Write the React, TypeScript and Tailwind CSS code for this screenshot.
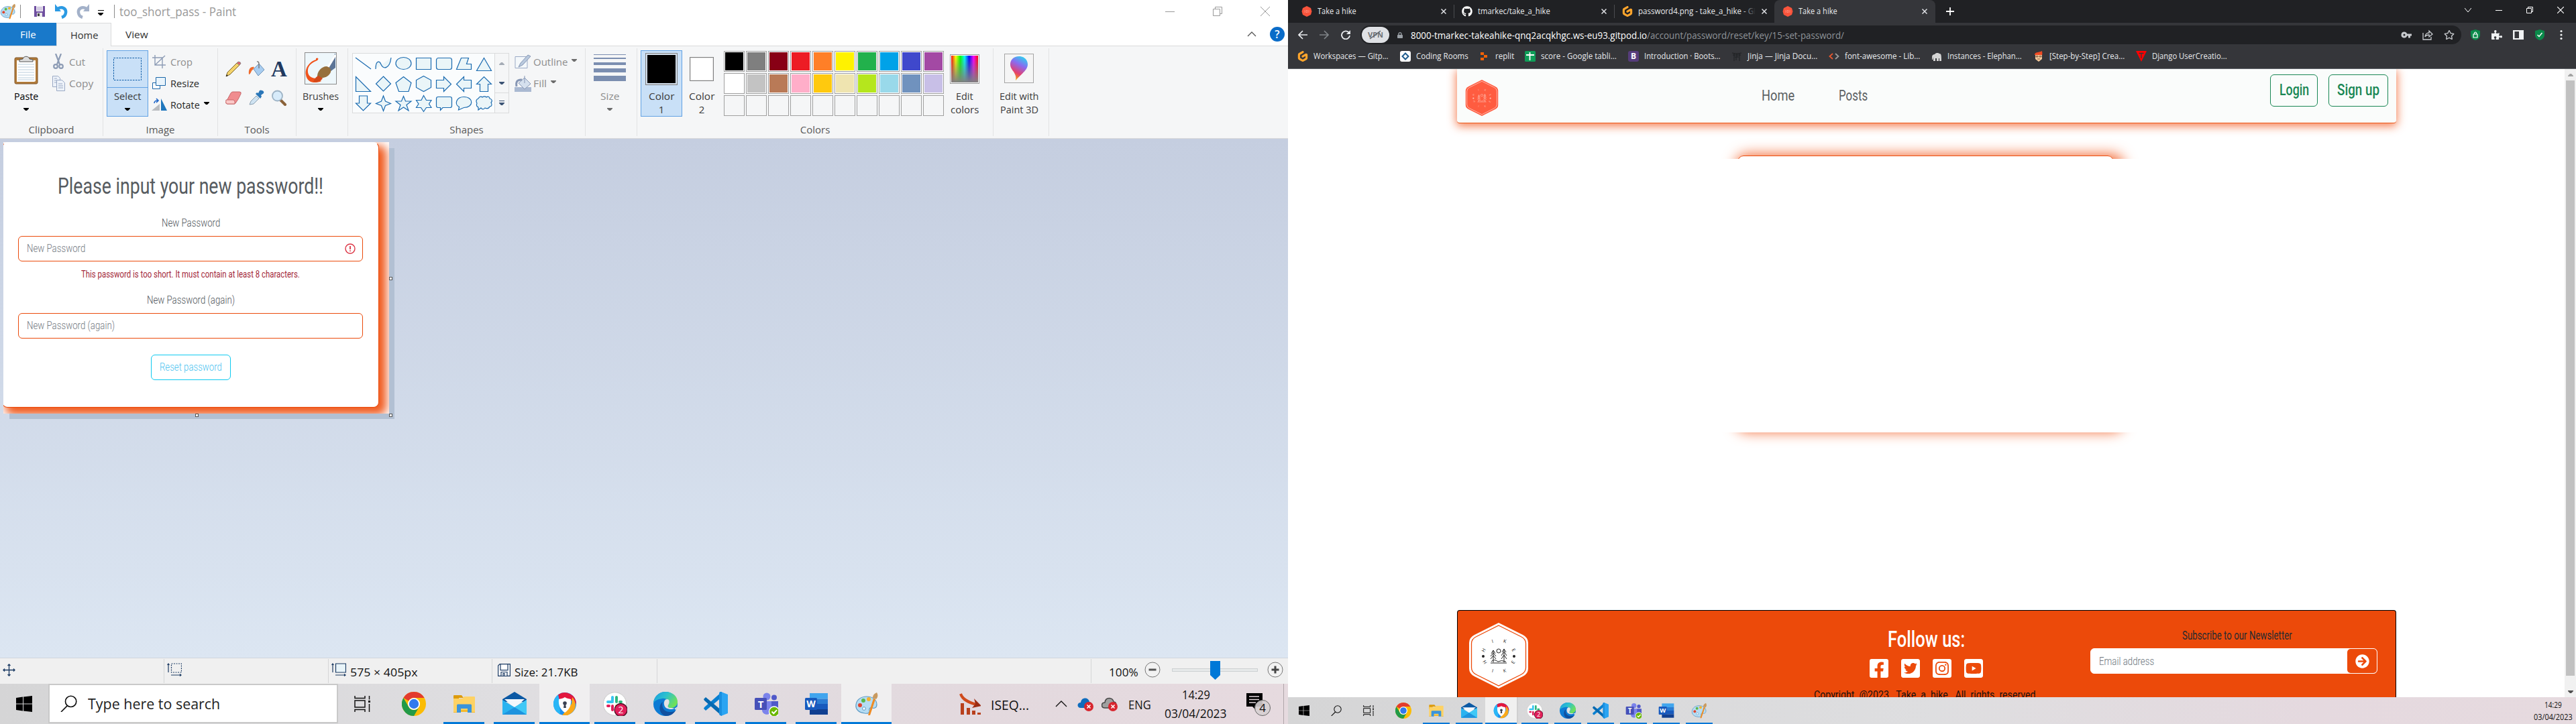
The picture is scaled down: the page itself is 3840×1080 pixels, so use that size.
import React, { useLayoutEffect, useRef } from "react";
import {
  FaFacebookSquare,
  FaTwitterSquare,
  FaInstagramSquare,
  FaYoutubeSquare,
  FaGithub,
  FaArrowCircleRight,
  FaRegStar,
  FaPuzzlePiece,
  FaLock,
} from "react-icons/fa";
import { SiGitpod } from "react-icons/si";

type Kids = { children?: React.ReactNode; className?: string };

/* One line of text, stretched or condensed to the width of its box. */
function Fit({ children, className = "" }: Kids) {
  const outer = useRef<HTMLSpanElement>(null);
  const inner = useRef<HTMLSpanElement>(null);
  useLayoutEffect(() => {
    const o = outer.current;
    const i = inner.current;
    if (!o || !i || !i.offsetWidth) return;
    i.style.transform = `scaleX(${o.clientWidth / i.offsetWidth})`;
  });
  return (
    <span ref={outer} className={"block shrink-0 whitespace-nowrap " + className}>
      <span ref={inner} className="inline-block origin-left whitespace-pre">
        {children}
      </span>
    </span>
  );
}

const Caret = ({ className = "text-black" }: Kids) => (
  <svg viewBox="0 0 8 4" className={"h-1 w-2 " + className} fill="currentColor">
    <path d="M0 0h8v1L5 4H3L0 1z" />
  </svg>
);

/* ---------- application icons ---------- */

const PaintIcon = ({ className = "" }: Kids) => (
  <svg viewBox="0 0 36 36" className={className}>
    <path d="M18 7c9 0 15 5 15 12 0 5-4 6-7 5-3-1-5 1-4 4 1 3-2 5-7 4C6 31 1 26 2 19 3 12 9 7 18 7z" fill="#b5dcf3" stroke="#5f9bc4" strokeWidth="1.2" />
    <circle cx="8" cy="20" r="3" fill="#e0452f" />
    <circle cx="13" cy="13" r="3" fill="#5cb84a" />
    <circle cx="21" cy="11" r="3" fill="#f2b233" />
    <circle cx="14" cy="25" r="2.4" fill="#f5f9fc" stroke="#5f9bc4" />
    <path d="M20 35l8-25 3 1-8 24z" fill="#ef8b23" />
    <path d="M27 9c0-4 2-6 6-8 2 3 2 7-1 10z" fill="#c99a60" />
  </svg>
);

const WindowsIcon = ({ className = "" }: Kids) => (
  <svg viewBox="0 0 24 24" className={className} fill="#000">
    <path d="M0 3l10-1.4v9.9H0zM11 1.5L24 0v11.5H11zM0 12.5h10v9.9L0 21zM11 12.5h13V24l-13-1.6z" />
  </svg>
);

const SearchGlyph = ({ className = "" }: Kids) => (
  <svg viewBox="0 0 24 24" className={className} fill="none" stroke="#111" strokeWidth="1.6">
    <circle cx="15" cy="9" r="7.8" />
    <path d="M10 15L1 24" />
  </svg>
);

const TaskViewIcon = ({ className = "" }: Kids) => (
  <svg viewBox="0 0 24 24" className={className} fill="none" stroke="#111" strokeWidth="1.5">
    <path d="M1 0v3.500h15V0M1 24v-3.500h15V24M1 7h15v10H1zM22.500 0v5.500M22.500 12v12" />
    <path d="M21 7h3v3h-3z" fill="#111" stroke="none" />
  </svg>
);

const ChromeIcon = ({ className = "" }: Kids) => (
  <svg viewBox="0 0 36 36" className={className}>
    <circle cx="18" cy="18" r="18" fill="#fbbc04" />
    <path d="M18 0a18 18 0 0 1 15.600 9H18a9 9 0 0 0-7.800 4.500L2.400 9A18 18 0 0 1 18 0z" fill="#e33b2e" />
    <path d="M2.400 9A18 18 0 0 0 18 36l7.800-13.500A9 9 0 0 1 10.200 22.500z" fill="#229a48" />
    <circle cx="18" cy="18" r="9" fill="#fff" />
    <circle cx="18" cy="18" r="7.200" fill="#3079ed" />
  </svg>
);

const FolderIcon = ({ className = "" }: Kids) => (
  <svg viewBox="0 0 36 36" className={className}>
    <path d="M2 6q0-1 1-1h11l3 4h-7v6H2z" fill="#dd9b0c" />
    <path d="M2 10h13l3-3h15q1 0 1 1v22H2z" fill="#fed264" />
    <path d="M7 31V20q0-1.500 1.500-1.500h19q1.500 0 1.500 1.500v11h-6v-6H13v6z" fill="#3a94dc" />
    <path d="M2 30h5v1H2zM29 30h5v1h-5zM13 27h10v3H13z" fill="#f5b92b" />
  </svg>
);

const MailIcon = ({ className = "" }: Kids) => (
  <svg viewBox="0 0 36 36" className={className}>
    <path d="M0 11L18 0l18 11v4H0z" fill="#0c59a4" />
    <path d="M3 11h30L18 24z" fill="#f3f8fc" />
    <path d="M0 12l18 11L36 12v22H0z" fill="#2ab3f0" />
    <path d="M36 12L18 23l18 11z" fill="#3fc8f6" />
    <path d="M0 34l18-11 18 11z" fill="#1e93de" />
  </svg>
);

const SecureIcon = ({ className = "" }: Kids) => (
  <svg viewBox="0 0 36 36" className={className}>
    <circle cx="18" cy="18" r="17" fill="#1c8ff0" />
    <path d="M8 4.500A17 17 0 0 1 35 18l-6-5H10z" fill="#e3173f" />
    <path d="M29 8c6 6 9 20-7 27H14l14-17z" fill="#fba919" />
    <path d="M8 4.500C1 10-2 20 5 29l6 5-1-21z" fill="#29b6f6" />
    <path d="M18 8c3 2 6 2 9 3 1 10-3 16-9 20C12 27 8 21 9 11c3-1 6-1 9-3z" fill="#fff" />
    <circle cx="18" cy="17" r="2.800" fill="#3b4252" />
    <path d="M17 18h2l1 6h-4z" fill="#3b4252" />
  </svg>
);

const SlackIcon = ({ className = "" }: Kids) => (
  <svg viewBox="0 0 36 36" className={className}>
    <circle cx="17.500" cy="18" r="17.200" fill="#fff" stroke="#c9c9c9" />
    <g strokeWidth="4" strokeLinecap="round">
      <path d="M14 8v5M7 15h7" stroke="#36c5f0" />
      <path d="M20 8v7M25 15h2" stroke="#2eb67d" />
      <path d="M7 21h2M14 21v6" stroke="#e01e5a" />
      <path d="M20 21h7M20 26v1" stroke="#ecb22e" />
    </g>
    <circle cx="26.500" cy="27" r="9.500" fill="#e01e5a" stroke="#4a0f22" strokeWidth="1.300" />
    <text x="26.500" y="32" textAnchor="middle" className="font-['Open_Sans'] text-[14px]" fill="#fff">2</text>
  </svg>
);

const EdgeIcon = ({ className = "" }: Kids) => (
  <svg viewBox="0 0 36 36" className={className}>
    <defs>
      <linearGradient id="edgeTop" x1="0" y1="0" x2="1" y2="0.500">
        <stop offset="0" stopColor="#1a9be0" />
        <stop offset="0.500" stopColor="#2bc0cf" />
        <stop offset="1" stopColor="#6ee05a" />
      </linearGradient>
    </defs>
    <circle cx="18" cy="18" r="18" fill="#0d7bd4" />
    <path d="M0 17C1 6 9 0 18 0c11 0 18 7 18 15 0 6-5 9-10 9-4 0-5-2-4-4 4-6-3-11-9-10C6 11 1 14 0 17z" fill="url(#edgeTop)" />
    <path d="M14 15c-3 10 4 16 12 15 3 0 5-1 7-2-3 5-8 8-14 8C9 35 6 20 14 15z" fill="#11509f" />
    <path d="M23 12c-4-3-8 1-7 7 1 5 5 7 11 7 4 0 7-3 9-4-2 3-1 4-3 5-1-3-4-3-7-3-4 0-5-2-4-4 2-3 2-6 1-8z" fill="#e3e3e4" />
  </svg>
);

const CodeIcon = ({ className = "" }: Kids) => (
  <svg viewBox="0 0 36 36" className={className}>
    <path d="M0 25l3 3L27 8V0L1 23z" fill="#0a7fd0" />
    <path d="M0 11l3-3 24 20v8L1 13z" fill="#0669b1" />
    <path d="M26 0l10 4v28l-10 4z" fill="#2ba4f2" />
    <path d="M24 0h3v36l-3-1-1-2V2z" fill="#1a8fe0" />
  </svg>
);

const TeamsIcon = ({ className = "" }: Kids) => (
  <svg viewBox="0 0 36 36" className={className}>
    <circle cx="19" cy="7" r="5.500" fill="#7b83eb" />
    <circle cx="30" cy="8.500" r="4" fill="#5059c9" />
    <path d="M25 14h11v10c0 7-8 8-11 5z" fill="#5059c9" />
    <path d="M12 14h14v13c0 9-14 9-14 0z" fill="#7b83eb" />
    <rect x="1" y="9" width="18" height="18" rx="1.500" fill="#4650b8" />
    <text x="10" y="23.500" textAnchor="middle" className="font-['Open_Sans'] text-[15px] font-bold" fill="#fff">T</text>
    <circle cx="30" cy="29.500" r="7.500" fill="#6bb700" stroke="#fff" strokeWidth="1.300" />
    <path d="M26.500 29.500l2.800 2.800 4.800-5.200" fill="none" stroke="#fff" strokeWidth="2" />
  </svg>
);

const WordIcon = ({ className = "" }: Kids) => (
  <svg viewBox="0 0 36 36" className={className}>
    <path d="M8 2h27v8.500H8z" fill="#41a5ee" />
    <path d="M8 10.500h27V18H8z" fill="#2b7cd3" />
    <path d="M8 18h27v8H8z" fill="#185abd" />
    <path d="M8 26h27v8H8z" fill="#103f91" />
    <rect x="1" y="9" width="18" height="18" rx="1.500" fill="#185abd" />
    <text x="10" y="23" textAnchor="middle" className="font-['Open_Sans'] text-[14px] font-bold" fill="#fff">W</text>
  </svg>
);

/* ---------- Paint ribbon ---------- */

const Group = ({ w, label, children }: { w: string; label?: string; children?: React.ReactNode }) => (
  <div className={"flex h-[131px] shrink-0 flex-col border-r border-[#e2e3e4] " + w}>
    <div className="flex h-[111px] items-start">{children}</div>
    <div className="flex h-5 items-center justify-center text-[#5a5a5a]">{label}</div>
  </div>
);

const label = (w: string, text: string) => <Fit className={"text-center leading-5 " + w}>{text}</Fit>;

const Row = ({ icon, w, text, dim, caret, iconW = "w-7" }: { icon: React.ReactNode; w: string; text: string; dim?: boolean; caret?: boolean; iconW?: string }) => (
  <div className={"flex h-8 items-center " + (dim ? "text-[#8d8d8d]" : "text-[#262626]")}>
    <div className={"flex " + iconW}>{icon}</div>
    <Fit className={w}>{text}</Fit>
    {caret && <Caret className={"mb-1 ml-1.5 " + (dim ? "text-[#6d6d6d]" : "text-black")} />}
  </div>
);

const shapeIcons: React.ReactNode[] = [
  <path d="M4 6l23 17" />,
  <path d="M4 23c0-14 6-12 8-7 3 8 13 7 15-10" />,
  <ellipse cx="15.500" cy="14.500" rx="11.500" ry="9" />,
  <path d="M4.500 6.500h22v17h-22z" />,
  <rect x="4.500" y="6.500" width="23" height="17" rx="3" />,
  <path d="M11.500 6.500h11l-3 9h7v8h-22z" />,
  <path d="M15.500 6.500l11 19h-22z" />,
  <path d="M4.500 4.500v22h22z" />,
  <path d="M15.500 4l11 11-11 11-11-11z" />,
  <path d="M15.500 4.500l11.500 9-4 13H8.500l-4.500-13z" />,
  <path d="M15.500 3.500l11 6v11l-11 6-11-6v-11z" />,
  <path d="M4.500 9.500h11v-5l11 11-11 11v-5h-11z" />,
  <path d="M26.500 9.500h-11v-5l-11 11 11 11v-5h11z" />,
  <path d="M9.500 26.500v-11h-5l11-11 11 11h-5v11z" />,
  <path d="M9.500 4v11h-5l11 11 11-11h-5V4z" />,
  <path d="M15.500 4l3 8 8 3.500-8 3-3 8-3-8-8-3 8-3.500z" />,
  <path d="M15.500 4.500l3 7.500h8.500l-7 5.500 3 8.500-7.500-5-7.500 5 3-8.500-7-5.500h8.500z" />,
  <path d="M15.500 3.500l4 7h7.500l-3.500 5.500 3.500 5.500h-7.500l-4 6-4-6H4.500l3.500-5.500-3.500-5.500h7.500z" />,
  <path d="M7 5.500h18q2.500 0 2.500 2.500v11q0 2.500-2.500 2.500H14l-3.500 4v-4H7q-2.500 0-2.500-2.500V8q0-2.500 2.500-2.500z" />,
  <path d="M15.500 5.500c15 0 15 16 0 16l-8 3.500 1-4.500c-8-4-4-15 7-15z" />,
  <path d="M7 8c2-4 5-3 6-2 3-2 5-1 6 0 3-2 5 0 5 2 4 1 4 4 2 6 2 3 1 6-2 6-2 4-5 3-7 2-2 3-5 2-6 0l-4 3v-4c-3-1-3-4-2-6-2-3-1-6 2-7z" />,
];

const palette = [
  "bg-black", "bg-[#7f7f7f]", "bg-[#880015]", "bg-[#ed1c24]", "bg-[#ff7f27]", "bg-[#fff200]", "bg-[#22b14c]", "bg-[#00a2e8]", "bg-[#3f48cc]", "bg-[#a349a4]",
  "bg-white", "bg-[#c3c3c3]", "bg-[#b97a57]", "bg-[#ffaec9]", "bg-[#ffc90e]", "bg-[#efe4b0]", "bg-[#b5e61d]", "bg-[#99d9ea]", "bg-[#7092be]", "bg-[#c8bfe7]",
];

function Ribbon() {
  return (
    <div className="flex h-[138px] items-start border-b border-[#d9dadb] bg-[#f5f6f7] pt-[3px]">
      <Group w="w-[154px]" label="Clipboard">
        <div className="mt-[3px] ml-2 flex h-[99px] w-[62px] flex-col items-center">
          <div className="flex h-[58px] items-center">
            <svg viewBox="0 0 36 44" className="h-11 w-9">
              <rect x="1" y="4" width="34" height="39" rx="2" fill="#b17b3a" stroke="#80562a" />
              <path d="M4 8h28v31l-2 1H4z" fill="#fff" />
              <path d="M6 14h24M6 18h24M6 22h24M6 26h24M6 30h24M6 34h24M6 37h24" stroke="#b9cddc" strokeWidth="1" />
              <path d="M8 10V7l5-1c1-5 9-5 10 0l5 1v3z" fill="#ddd" stroke="#555" />
            </svg>
          </div>
          {label("w-[36px]", "Paste")}
          <Caret className="mt-2 text-black" />
        </div>
        <div className="mt-[4px] ml-2">
          <Row dim iconW="w-[25px]" w="w-6" text="Cut" icon={
            <svg viewBox="0 0 18 24" className="h-6 w-[18px]" fill="none" stroke="#8d9cb5" strokeWidth="2.200">
              <path d="M5 0l6 16M13 0L7 16" /><circle cx="5" cy="19" r="2.800" /><circle cx="13" cy="19" r="2.800" />
            </svg>} />
          <Row dim iconW="w-[25px]" w="w-9" text="Copy" icon={
            <svg viewBox="0 0 20 24" className="h-6 w-5" fill="#edf2f9" stroke="#9aa9c4">
              <path d="M.5 1.500h8l3 3v13H.5z" /><path d="M6.500 7.500h8l4 4v12h-12z" /><path d="M3 5h4M3 8h3M3 11h3M9 13h6M9 16h7M9 19h7" />
            </svg>} />
        </div>
      </Group>

      <Group w="w-[171px]" label="Image">
        <div className="mt-[3px] ml-[5px] flex h-[99px] w-[62px] flex-col items-center border border-[#62a2e4] bg-[#c9e0f7]">
          <div className="flex h-[55px] w-full items-center justify-center border-b border-[#62a2e4]">
            <svg viewBox="0 0 42 34" className="h-[34px] w-[42px]"><rect x=".5" y=".5" width="41" height="33" fill="none" stroke="#0b5aa5" strokeDasharray="2.500 1.500" /></svg>
          </div>
          <div className="mt-0.5 text-[#3b3b3b]">{label("w-10", "Select")}</div>
          <Caret className="mt-2 text-black" />
        </div>
        <div className="mt-[4px] ml-[5px]">
          <Row dim w="w-[33px]" text="Crop" icon={
            <svg viewBox="0 0 22 20" className="h-5 w-[22px]" fill="none" stroke="#8d9cb5" strokeWidth="1.400"><path d="M1 4h15v16M5 0v15h16M5 15L20 1" /></svg>} />
          <Row w="w-[43px]" text="Resize" icon={
            <svg viewBox="0 0 22 18" className="h-[18px] w-[22px]" fill="#fff" stroke="#1a66a8"><path d="M1.500 8.500h11v9h-11z" /><path d="M6.500.5h14v12h-14z" fill="#e9f4fc" /></svg>} />
          <Row w="w-[44px]" text="Rotate" caret icon={
            <svg viewBox="0 0 24 20" className="h-5 w-6"><path d="M0 19h12V9z" fill="#b9bcc0" /><path d="M14 1v18h9z" fill="#1f77bd" /><path d="M4 8q0-4 5-4M7 1l3 3-3 3" fill="none" stroke="#1f66c8" strokeWidth="1.600" /></svg>} />
        </div>
      </Group>

      <Group w="w-[117px]" label="Tools">
        <div className="mt-[9px] ml-[6px] grid grid-cols-[34px_34px_34px] grid-rows-[43px_43px] place-items-center">
          <svg viewBox="0 0 24 24" className="size-6"><path d="M1 23l2-6L17 3l4 3L7 20z" fill="#f4d36c" stroke="#7d6428" /><path d="M17 3l2-2q4 0 4 3l-2 2z" fill="#e4606a" stroke="#8d8d8d" /><path d="M1 23l1-3 2 2z" fill="#222" /></svg>
          <svg viewBox="0 0 24 24" className="size-6"><path d="M8 12l8-8 8 9-9 9z" fill="#a9cdf0" stroke="#6d93b8" /><path d="M9 9c-5-1-9 2-8 11 3 0 3-6 6-7z" fill="#ef6a2b" /><path d="M13 1q3-1 3 4v6" fill="none" stroke="#777" strokeWidth="1.400" /></svg>
          <span className="font-['Liberation_Serif'] text-[33px] leading-6 font-bold text-[#20395f]">A</span>
          <svg viewBox="0 0 24 20" className="h-5 w-6"><path d="M8 3q1-2 3-2h10q3 0 2 3l-4 8-4 6q-1 1-3 1H3q-3 0-2-3z" fill="#f08c8f" stroke="#c7686b" /><path d="M1 13h11q3 1 2 6H3q-3 0-2-6z" fill="#fbc9c8" stroke="#c7686b" /></svg>
          <svg viewBox="0 0 24 24" className="size-6"><path d="M2 22l2-5 8-8 4 4-8 8z" fill="#cfe3f2" stroke="#8aa0b2" /><path d="M11 6l7 7 2-3-1-2 4-3q1-3-2-4t-4 0l-2 4-2-1z" fill="#2a76b8" /></svg>
          <svg viewBox="0 0 24 24" className="size-6"><path d="M14 15l7 7" stroke="#8a6239" strokeWidth="4" strokeLinecap="round" /><circle cx="9.500" cy="9" r="7.500" fill="#d7ebfa" stroke="#9db3c5" strokeWidth="1.800" /></svg>
        </div>
      </Group>

      <Group w="w-[77px]">
        <div className="mt-[3px] ml-[5px] flex h-[99px] w-[62px] flex-col items-center text-[#3b3b3b]">
          <div className="flex h-[58px] items-center pb-1">
            <svg viewBox="0 0 48 48" className="size-12"><rect x=".5" y=".5" width="47" height="47" fill="#eef7fb" stroke="#8b8b8b" /><path d="M35 22L46 1v22l-8 6z" fill="#5d7597" /><path d="M46 4L34 24" stroke="#fff" strokeWidth="3" /><path d="M17 9c4-2 5 2 0 4C8 17 4 22 5 30c1 6 6 9 14 9l6 4c-9 4-21 3-23-9C0 21 10 13 17 11z" fill="#f0531c" /><path d="M19 38c-1-9 6-17 14-17 8 2 8 9 2 14-4 3-10 4-16 3z" fill="#96703d" /><path d="M13 44c2-4 4-8 8-9l6 4c-3 4-8 6-14 5z" fill="#d1491a" /></svg>
          </div>
          {label("w-[54px]", "Brushes")}
          <Caret className="mt-2 text-black" />
        </div>
      </Group>

      <Group w="w-[354px]" label="Shapes">
        <div className="mt-[7px] ml-[6px] grid h-[90px] w-[212px] grid-cols-[repeat(7,30px)] grid-rows-[30px_29px_29px] border border-r-0 border-[#dadbdc] bg-[#fafcfd]">
          {shapeIcons.map((s, i) => (
            <svg key={i} viewBox="0 0 30 30" className="size-[30px] overflow-visible" fill="#eaf5f8" stroke="#1b6bb0" strokeWidth="1.200">{s}</svg>
          ))}
        </div>
        <div className="mt-[7px] flex w-[22px] flex-col border border-[#dadbdc]">
          <div className="flex h-[29px] items-center justify-center"><Caret className="rotate-180 text-[#a5acb6]" /></div>
          <div className="flex h-[29px] items-center justify-center"><Caret className="text-[#3b5374]" /></div>
          <div className="flex h-[30px] flex-col items-center justify-center gap-0.5 border-t border-[#dadbdc] text-[#3b5374]"><div className="h-px w-2 bg-[#3b5374]" /><Caret className="text-[#3b5374]" /></div>
        </div>
        <div className="mt-[4px] ml-2">
          <Row dim w="w-[51px]" text="Outline" caret icon={
            <svg viewBox="0 0 25 22" className="h-[22px] w-[25px]"><path d="M1 3.500h18v17H1z" fill="#f4f8fb" stroke="#9aa9c4" /><path d="M6 19l3-6L20 1l4 2-12 13z" fill="#b9c9dd" stroke="#8797b5" /></svg>} />
          <Row dim w="w-5" text="Fill" caret icon={
            <svg viewBox="0 0 25 25" className="size-[25px]"><path d="M0 18h25v7H0z" fill="#aab9d2" /><path d="M6 12l9-8 9 9-9 8z" fill="#d5e0ee" stroke="#8797b5" /><path d="M3 17Q1 6 11 7" fill="none" stroke="#8797b5" strokeWidth="3" /><path d="M15 1v11" stroke="#8797b5" /></svg>} />
        </div>
      </Group>

      <Group w="w-[77px]">
        <div className="mt-[3px] ml-[5px] flex h-[99px] w-[62px] flex-col items-center text-[#8d8d8d]">
          <div className="flex h-[58px] w-12 flex-col pt-1.5">
            <div className="h-px bg-[#7b8eb0]" />
            <div className="mt-1 h-0.5 bg-[#7b8eb0]" />
            <div className="mt-[5px] h-1 bg-[#7b8eb0]" />
            <div className="mt-[5px] h-1.5 bg-[#7b8eb0]" />
            <div className="mt-[5px] h-2 bg-[#7b8eb0]" />
          </div>
          {label("w-7", "Size")}
          <Caret className="mt-2 text-[#6d6d6d]" />
        </div>
      </Group>

      <Group w="w-[531px]" label="Colors">
        <div className="mt-[3px] ml-[5px] flex h-[99px] w-[62px] flex-col items-center border border-[#62a2e4] bg-[#c9e0f7] text-[#3b3b3b]">
          <div className="mt-[3px] mb-[6px] size-12 border border-[#808080] bg-[#d3dfec] p-0.5"><div className="size-full bg-black" /></div>
          {label("w-[38px]", "Color")}
          <div>1</div>
        </div>
        <div className="mt-[3px] flex h-[99px] w-[58px] flex-col items-center text-[#3b3b3b]">
          <div className="mt-[10px] mb-3 size-9 border border-[#808080] bg-white shadow-[inset_0_0_0_1px_#e5e5e5]" />
          {label("w-[38px]", "Color")}
          <div>2</div>
        </div>
        <div className="mt-[4px] ml-1 grid grid-cols-[repeat(10,31px)] gap-0.5">
          {Array.from({ length: 30 }, (_, i) => (
            <div key={i} className={"size-[31px] border border-[#a0a0a0] p-px " + (i < 20 ? "bg-white" : "bg-[#f5f6f7]")}>
              <div className={"size-full " + (palette[i] ?? "")} />
            </div>
          ))}
        </div>
        <div className="mt-[3px] flex h-[99px] w-[62px] flex-col items-center text-[#3b3b3b]">
          <div className="mt-1.5 mb-2 size-11 border border-[#9a9a9a] bg-white p-px">
            <div className="size-full bg-[linear-gradient(to_bottom,transparent,#808080),linear-gradient(to_right,#f00,#ff0,#0f0,#0ff,#00f,#f0f,#f00)]" />
          </div>
          {label("w-[26px]", "Edit")}
          {label("w-[42px]", "colors")}
        </div>
      </Group>

      <Group w="w-[83px]">
        <div className="mt-[3px] ml-[7px] flex h-[99px] w-[62px] flex-col items-center text-[#3b3b3b]">
          <div className="mt-[5px] mb-[9px] flex size-11 items-center justify-center border border-[#a5a5a5] bg-[#f5f5f5]">
            <svg viewBox="0 0 26 36" className="h-9 w-[26px]">
              <defs><linearGradient id="p3d" x1="0.700" y1="0" x2="0.300" y2="1"><stop offset="0" stopColor="#2fd0f0" /><stop offset="0.350" stopColor="#8a6bf0" /><stop offset="0.700" stopColor="#e4406f" /><stop offset="1" stopColor="#f2b200" /></linearGradient></defs>
              <path d="M13 0c8 0 13 6 13 12 0 9-10 14-18 24 1-5 0-8-3-13C1 18 0 15 0 12 0 5 5 0 13 0z" fill="url(#p3d)" />
            </svg>
          </div>
          {label("w-[59px]", "Edit with")}
          {label("w-[57px]", "Paint 3D")}
        </div>
      </Group>
    </div>
  );
}

function TitleBar() {
  return (
    <div className="flex h-[34px] items-center bg-white">
      <PaintIcon className="size-6" />
      <div className="ml-1.5 h-5 w-px bg-[#8a8a8a]" />
      <svg viewBox="0 0 16 16" className="ml-5 size-4"><path d="M0 0h16v16H0z" fill="#6f4fa0" /><path d="M3 0h10v8H3z" fill="#f4f1f8" /><path d="M4 2h8M4 4h8M4 6h8" stroke="#b4a6cc" /><path d="M4 10h8v6H4z" fill="#e8e8e8" /><path d="M5 11h3v4H5z" fill="#444" /></svg>
      <svg viewBox="0 0 20 22" className="ml-[15px] h-[22px] w-5" fill="none" stroke="#2b9ae3" strokeWidth="4.500"><path d="M4 7c7-4 13 0 12 6-.5 4-3 6-6 7" /><path d="M0 0v11h9z" fill="#2b9ae3" stroke="none" /></svg>
      <svg viewBox="0 0 20 22" className="ml-[11px] h-[22px] w-5" fill="none" stroke="#a3b1c9" strokeWidth="4.500"><path d="M16 7C9 3 3 7 4 13c.5 4 3 6 6 7" /><path d="M20 0v11h-9z" fill="#a3b1c9" stroke="none" /></svg>
      <div className="mt-1 ml-3 flex w-2.5 flex-col items-center gap-[3px]"><div className="h-px w-[9px] bg-black" /><Caret /></div>
      <div className="ml-[15px] h-5 w-px bg-[#8a8a8a]" />
      <Fit className="ml-[7px] w-[174px] text-[18px] text-[#999]">too_short_pass - Paint</Fit>
      <div className="ml-auto flex items-center gap-[57px] pr-[27px] text-[#999]">
        <svg viewBox="0 0 14 14" className="size-3.5" stroke="currentColor"><path d="M0 7.500h14" /></svg>
        <svg viewBox="0 0 14 14" className="size-3.5" stroke="currentColor" fill="none"><path d="M.5 3.500h10v10H.5zM3.500 3V.5h10v10H11" /></svg>
        <svg viewBox="0 0 14 14" className="size-3.5" stroke="currentColor"><path d="M0 0l14 14M14 0L0 14" /></svg>
      </div>
    </div>
  );
}

/* ---------- the picture that is open on the canvas ---------- */

function Picture() {
  return (
    <div className="relative mt-[5px] ml-[5px] h-[405px] w-[575px]">
      <div className="absolute top-[9px] left-[9px] h-[404px] w-[574px] bg-[#b2c0d3]" />
      <div className="relative h-full w-full overflow-hidden bg-white font-['Roboto'] font-light">
        <div className="-ml-[2px] flex h-[396px] w-[562px] flex-col items-center rounded-[8px] border border-[#eb4b0c] border-t-white bg-white shadow-[8px_8px_14px_3px_#f05a1e]">
          <Fit className="mt-[42px] w-[396px] text-[34px] leading-[44px] font-normal text-[#565b60]">Please input your new password!!</Fit>
          <Fit className="mt-[22px] w-[87px] text-[16px] leading-6 text-[#50565b]">New Password</Fit>
          <div className="mt-[7px] flex h-[38px] w-[514px] items-center justify-between rounded-md border border-[#eb4b0c] pr-[10px] pl-3">
            <Fit className="w-[87px] text-[16px] text-[#73797f]">New Password</Fit>
            <svg viewBox="0 0 16 16" className="size-4" fill="none" stroke="#dc3545" strokeWidth="1.400"><circle cx="8" cy="8" r="7" /><path d="M8 4v5M8 10.500v1.500" strokeWidth="1.800" /></svg>
          </div>
          <Fit className="mt-[7px] w-[326px] text-[14px] leading-6 font-normal text-[#a3283a]">This password is too short. It must contain at least 8 characters.</Fit>
          <Fit className="mt-[15px] w-[131px] text-[16px] leading-6 text-[#50565b]">New Password (again)</Fit>
          <div className="mt-[7px] flex h-[38px] w-[514px] items-center rounded-md border border-[#eb4b0c] pl-3">
            <Fit className="w-[131px] text-[16px] text-[#73797f]">New Password (again)</Fit>
          </div>
          <div className="mt-6 flex h-[38px] w-[119px] items-center justify-center rounded-md border border-[#0dcaf0] text-[#4cc3f0]">
            <Fit className="w-[93px] text-[16px]">Reset password</Fit>
          </div>
        </div>
      </div>
      <div className="absolute top-[201px] left-[575px] size-[5px] border border-[#555] bg-white" />
      <div className="absolute top-[405px] left-[286px] size-[5px] border border-[#555] bg-white" />
      <div className="absolute top-[405px] left-[575px] size-[5px] border border-[#555] bg-white" />
    </div>
  );
}

function StatusBar() {
  const cell = "flex h-9 shrink-0 items-center border-r border-[#d5d6d7] ";
  return (
    <div className="flex h-[39px] items-center border-t border-[#cfd6dd] bg-[#f0f0f0] text-[16px] text-[#111]">
      <div className={cell + "w-[245px] pl-1"}>
        <svg viewBox="0 0 19 19" className="mb-1 size-[19px]" fill="none" stroke="#1b3a63" strokeWidth="1.300"><path d="M9.500 1v17M1 9.500h17M7.500 3l2-2 2 2M7.500 16l2 2 2-2M3 7.500l-2 2 2 2M16 7.500l2 2-2 2" /></svg>
      </div>
      <div className={cell + "w-[245px] pl-1"}>
        <svg viewBox="0 0 22 20" className="mb-1 h-5 w-[22px]" fill="none" stroke="#1b3a63" strokeWidth="1.200"><path d="M6.500 1h15v13h-15z" strokeDasharray="2 1.500" /><path d="M2 14V1M.5 3L2 1l1.500 2M6 18h15M19 16.500l2 1.500-2 1.500" /></svg>
      </div>
      <div className={cell + "w-[244px] pl-1"}>
        <svg viewBox="0 0 22 20" className="mb-1 h-5 w-[22px]" fill="none" stroke="#1b3a63" strokeWidth="1.200"><path d="M6.500 1h15v13h-15z" fill="#e8f4f9" /><path d="M2 14V1M.5 3L2 1l1.500 2M6 18h15M19 16.500l2 1.500-2 1.500" /></svg>
        <Fit className="mt-1 ml-1.5 w-[101px]">575 × 405px</Fit>
      </div>
      <div className={cell + "w-[246px] pl-2"}>
        <svg viewBox="0 0 19 19" className="mb-1 size-[19px]" fill="#fff" stroke="#1b3a63" strokeWidth="1.200"><path d="M3 .6h15.400v17.800H.6V3z" /><path d="M4 .6h11v9H4zM5 12.500h9v6H5zM8 14.500h2v4H8z" /></svg>
        <Fit className="mt-1 ml-1.5 w-[94px]">Size: 21.7KB</Fit>
      </div>
      <div className={cell + "w-[647px]"} />
      <div className="flex h-9 items-center pb-1">
        <Fit className="mt-2 ml-[26px] w-11">100%</Fit>
        <svg viewBox="0 0 24 24" className="ml-[9px] size-6"><circle cx="12" cy="12" r="11" fill="#f2f2f2" stroke="#777" /><path d="M6.500 12h11" stroke="#555" strokeWidth="3" /></svg>
        <div className="relative ml-[17px] h-[5px] w-32 border border-[#ccd0d2] bg-[#e7eaea]">
          <svg viewBox="0 0 15 28" className="absolute -top-[12px] left-[56px] h-7 w-[15px]" fill="#0078d7"><path d="M0 0h15v21l-7.500 7L0 21z" /></svg>
        </div>
        <svg viewBox="0 0 24 24" className="ml-[14px] size-6"><circle cx="12" cy="12" r="11" fill="#f2f2f2" stroke="#777" /><path d="M6.500 12h11M12 6.500v11" stroke="#444" strokeWidth="3" /></svg>
      </div>
    </div>
  );
}

const apps = [ChromeIcon, FolderIcon, MailIcon, SecureIcon, SlackIcon, EdgeIcon, CodeIcon, TeamsIcon, WordIcon, PaintIcon];

function LargeTaskbar() {
  return (
    <div className="flex h-[60px] bg-[linear-gradient(to_right,#d5d5d6,#dfdee1_40%,#e3d9de_75%,#e6dadf)]">
      <div className="flex w-[72px] items-center justify-center"><WindowsIcon className="size-6" /></div>
      <div className="flex h-[59px] w-[432px] items-center border-2 border-[#c9c9c9] bg-white">
        <SearchGlyph className="ml-4 size-[25px]" />
        <Fit className="ml-[16px] w-[197px] text-[21px] text-[#222]">Type here to search</Fit>
      </div>
      <div className="flex w-[75px] items-center pl-6"><TaskViewIcon className="size-6" /></div>
      {apps.map((Icon, i) => (
        <div key={i} className={"flex h-full w-[75px] flex-col items-center " + (i === 3 || i === 9 ? "bg-[#f0eff0]" : "")}>
          <div className="flex h-[57px] items-center pt-[3px]"><Icon className="size-9" /></div>
          {i > 0 && <div className={"h-[3px] bg-[#0078d7] " + (i === 3 || i === 9 ? "w-full" : "w-[61px]")} />}
        </div>
      ))}
      <div className="ml-auto flex h-full items-center text-[#111]">
        <svg viewBox="0 0 32 32" className="size-8"><path d="M2 15h5v17H2zM11 22h5v10h-5zM19 26h5v6h-5zM27 29h5v3h-5z" fill="#b8401c" /><path d="M2 1c3 9 12 13 24 16" fill="none" stroke="#cf4a1c" strokeWidth="4" /><path d="M22 8l11 11-14 3 5-6z" fill="#9c2d14" /></svg>
        <Fit className="mt-1 ml-[15px] w-[57px] text-[20px]">ISEQ...</Fit>
        <svg viewBox="0 0 18 10" className="ml-[39px] h-2.5 w-[18px]" fill="none" stroke="#111" strokeWidth="1.300"><path d="M1 9l8-8 8 8" /></svg>
        <svg viewBox="0 0 24 22" className="ml-[15px] h-[22px] w-6"><path d="M5 17c-6 0-6-8 0-8 1-9 12-8 13-1 5 0 5 9 0 9z" fill="#0f6cbd" /><circle cx="17" cy="15" r="7" fill="#d8262f" /><path d="M14.500 12.500l5 5M19.500 12.500l-5 5" stroke="#fff" strokeWidth="1.600" /></svg>
        <svg viewBox="0 0 24 22" className="ml-3 h-[22px] w-6"><path d="M5 17c-6 0-6-8 0-8 1-9 12-8 13-1 5 0 5 9 0 9z" fill="#a0a0a0" stroke="#444" strokeWidth="1.500" /><circle cx="17" cy="15" r="7" fill="#d8262f" /><path d="M14.500 12.500l5 5M19.500 12.500l-5 5" stroke="#fff" strokeWidth="1.600" /></svg>
        <Fit className="mt-0.5 ml-4 w-[34px] text-[18px]">ENG</Fit>
        <div className="ml-5 flex w-[93px] flex-col items-center text-[18px] leading-7">
          <Fit className="w-[42px]">14:29</Fit>
          <Fit className="w-[93px]">03/04/2023</Fit>
        </div>
        <div className="relative ml-[29px] h-[36px] w-[38px]">
          <svg viewBox="0 0 38 36" className="h-full w-full"><path d="M0 2h24v20H14v5l-5-5H0z" fill="#000" /><path d="M4 7h15M4 11.500h15M4 16h10" stroke="#e6dadf" strokeWidth="1.300" /><circle cx="24" cy="24" r="11.500" fill="#d6cfd2" fillOpacity="0.900" stroke="#666" /></svg>
          <span className="absolute top-[12px] left-[12px] w-6 text-center text-[17px] leading-6">4</span>
        </div>
        <div className="mr-[6px] ml-[17px] h-full w-px bg-[#b0a6aa]" />
      </div>
    </div>
  );
}

function PaintScreen() {
  return (
    <div className="flex h-[1080px] w-[1920px] shrink-0 flex-col overflow-hidden bg-white font-['Open_Sans',sans-serif] text-[15px] leading-5">
      <TitleBar />
      <div className="flex h-[35px] items-stretch border-b border-[#dadbdc] bg-white text-[#333]">
        <div className="flex w-[84px] items-center justify-center bg-[#1979ca] text-white"><Fit className="w-6">File</Fit></div>
        <div className="-mb-px flex w-[82px] items-center justify-center border border-b-0 border-[#dadbdc] bg-[#f5f6f7]"><Fit className="w-[41px]">Home</Fit></div>
        <div className="flex items-center pl-[21px]"><Fit className="w-[34px]">View</Fit></div>
        <div className="ml-auto flex items-center gap-5 pr-[5px]">
          <svg viewBox="0 0 14 8" className="h-2 w-3.5" fill="none" stroke="#555" strokeWidth="1.300"><path d="M1 7l6-6 6 6" /></svg>
          <div className="flex size-[22px] items-center justify-center rounded-full bg-[#0a6cc8] text-[16px] font-semibold text-white">?</div>
        </div>
      </div>
      <Ribbon />
      <div className="flex-1 overflow-hidden bg-linear-to-b from-[#c5cee0] to-[#dce6f2]"><Picture /></div>
      <StatusBar />
      <LargeTaskbar />
    </div>
  );
}

/* ---------- browser ---------- */

const HikeFavicon = () => (
  <svg viewBox="0 0 16 16" className="size-4 shrink-0"><path d="M8 0l6 3 1.500 5L14 13l-6 3-6-3L.5 8 2 3z" fill="#f9543c" /><path d="M5 6v4M7 6.500h2v3H7zM11 6v4" stroke="#fb9d8c" fill="none" strokeWidth=".7" /></svg>
);

const X = () => (
  <svg viewBox="0 0 8 8" className="size-2 shrink-0" stroke="#dfe1e5" strokeWidth="1.500"><path d="M.5.5l7 7M7.500.5l-7 7" /></svg>
);

function Tabs() {
  const tab = "flex h-full shrink-0 items-center ";
  return (
    <div className="flex h-[34px] items-center bg-[#202124] text-[12px] text-[#e8eaed]">
      <div className={tab + "w-[247px] pl-5"}><HikeFavicon /><Fit className="ml-2 w-[58px]">Take a hike</Fit><div className="ml-auto pr-[11px]"><X /></div></div>
      <div className="h-5 w-px bg-[#4a4c50]" />
      <div className={tab + "w-[238px] pl-[11px]"}><FaGithub className="size-4 text-white" /><Fit className="ml-2 w-[108px]">tmarkec/take_a_hike</Fit><div className="ml-auto pr-[11px]"><X /></div></div>
      <div className="h-5 w-px bg-[#4a4c50]" />
      <div className={tab + "w-[238px] pl-[11px]"}>
        <SiGitpod className="size-4 text-[#ffa52c]" />
        <div className="relative ml-2">
          <Fit className="w-[175px]">password4.png - take_a_hike - Gi</Fit>
          <div className="absolute top-0 right-0 h-full w-5 bg-linear-to-r from-transparent to-[#202124]" />
        </div>
        <div className="ml-auto pr-[11px]"><X /></div>
      </div>
      <div className={tab + "w-[240px] rounded-t-lg bg-[#35363a] pl-3"}><HikeFavicon /><Fit className="ml-2 w-[58px]">Take a hike</Fit><div className="ml-auto pr-3"><X /></div></div>
      <svg viewBox="0 0 12 12" className="ml-4 size-3" stroke="#fff" strokeWidth="1.800"><path d="M6 0v12M0 6h12" /></svg>
      <div className="mb-[5px] ml-auto flex items-center gap-9 pr-[18px] text-white">
        <svg viewBox="0 0 10 10" className="size-2.5" fill="none" stroke="currentColor"><path d="M0 2l5 6 5-6" /></svg>
        <svg viewBox="0 0 10 10" className="size-2.5" stroke="currentColor"><path d="M0 5.500h10" /></svg>
        <svg viewBox="0 0 10 10" className="size-2.5" fill="none" stroke="currentColor"><path d="M.5 2.500h7v7h-7zM2.500 2V.5h7v7H8" /></svg>
        <svg viewBox="0 0 10 10" className="size-2.5" stroke="currentColor" strokeWidth="1.200"><path d="M0 0l10 10M10 0L0 10" /></svg>
      </div>
    </div>
  );
}

const Shield = ({ children }: Kids) => (
  <svg viewBox="0 0 16 16" className="size-4 shrink-0"><path d="M8 0l7 2v6c0 4-3 7-7 8-4-1-7-4-7-8V2z" fill="#0b8a4a" />{children}</svg>
);

function Toolbar() {
  return (
    <div className="flex h-9 items-center bg-[#35363a] text-[14px] text-[#9aa0a6]">
      <svg viewBox="0 0 14 14" className="ml-[15px] size-3.5" fill="none" stroke="#e8eaed" strokeWidth="1.700"><path d="M14 7H1M7 1L1 7l6 6" /></svg>
      <svg viewBox="0 0 14 14" className="ml-[18px] size-3.5" fill="none" stroke="#7f8387" strokeWidth="1.700"><path d="M0 7h13M7 1l6 6-6 6" /></svg>
      <svg viewBox="0 0 14 14" className="ml-[18px] size-3.5" fill="none" stroke="#e8eaed" strokeWidth="1.900"><path d="M12 4a6 6 0 1 0 1 4" /><path d="M14 0v6H8z" fill="#e8eaed" stroke="none" /></svg>
      <div className="ml-[15px] flex h-7 w-[1641px] items-center rounded-full bg-[#202124] pl-0.5">
        <div className="relative flex h-6 w-[41px] items-center justify-center rounded-full bg-[#dfe1e5] text-[11px] font-bold text-[#6d7175]">
          VPN
          <svg viewBox="0 0 24 14" className="absolute top-[5px] left-2 h-3.5 w-6" stroke="#5f6368" strokeWidth="1.500"><path d="M4 13L20 1" /></svg>
        </div>
        <FaLock className="ml-3 h-[11px] w-2" />
        <Fit className="ml-3 w-[352px] text-white">8000-tmarkec-takeahike-qnq2acqkhgc.ws-eu93.gitpod.io</Fit>
        <Fit className="w-[294px] text-[#8f9499]">/account/password/reset/key/15-set-password/</Fit>
        <div className="ml-auto flex items-center gap-4 pr-2.5 text-[#c8cbcf]">
          <svg viewBox="0 0 16 16" className="size-4" fill="currentColor"><path d="M5 3.500a4.500 4.500 0 1 0 4.200 6H11v3h3v-3h2v-3H9.200A4.500 4.500 0 0 0 5 3.500zm0 3a1.500 1.500 0 1 1 0 3 1.500 1.500 0 0 1 0-3z" fillRule="evenodd" /></svg>
          <svg viewBox="0 0 16 16" className="size-4" fill="none" stroke="currentColor" strokeWidth="1.300"><path d="M1 5v10h12v-4M4 11c0-4 3-6 6-6V2l5 5-5 4V8c-3 0-5 1-6 3z" /></svg>
          <FaRegStar className="size-4" />
        </div>
      </div>
      <div className="ml-auto flex items-center gap-4 pr-[14px] text-[#f1f3f4]">
        <Shield><path d="M5 7h6v5H5zM6.500 7V5q1.500-2 3 0v2" fill="none" stroke="#fff" strokeWidth="1.200" /></Shield>
        <FaPuzzlePiece className="size-4" />
        <svg viewBox="0 0 16 16" className="size-4"><path d="M0 1h16v14H0zM2.500 3v10H9V3z" fill="currentColor" fillRule="evenodd" /></svg>
        <Shield><path d="M4.500 8l2.500 2.500L11.500 5" fill="none" stroke="#fff" strokeWidth="1.500" /></Shield>
        <svg viewBox="0 0 16 16" className="size-4" fill="currentColor"><circle cx="8" cy="2.500" r="1.600" /><circle cx="8" cy="8" r="1.600" /><circle cx="8" cy="13.500" r="1.600" /></svg>
      </div>
    </div>
  );
}

const bookmarks: { icon: React.ReactNode; text: string; w: string; gap: string }[] = [
  { text: "Workspaces — Gitp...", w: "w-28", gap: "ml-3.5", icon: <SiGitpod className="size-4 text-[#ffa52c]" /> },
  { text: "Coding Rooms", w: "w-[78px]", gap: "ml-[17px]", icon: <svg viewBox="0 0 16 16" className="size-4"><rect width="16" height="16" rx="3" fill="#fff" /><path d="M8 3.500L12.500 8 8 12.500 3.500 8z" fill="none" stroke="#1f5c8e" strokeWidth="2" /></svg> },
  { text: "replit", w: "w-7", gap: "ml-[16px]", icon: <svg viewBox="0 0 16 16" className="size-4" fill="#f26207"><path d="M2 2h5v4H2zM7 6h5v4H7zM2 10h5v4H2z" /></svg> },
  { text: "score - Google tabli...", w: "w-[113px]", gap: "ml-[16px]", icon: <svg viewBox="0 0 16 16" className="size-4"><rect width="16" height="16" rx="1.500" fill="#0f9d58" /><path d="M2 6h12M7.500 2v12" stroke="#fff" strokeWidth="1.800" /></svg> },
  { text: "Introduction · Boots...", w: "w-[113px]", gap: "ml-[17px]", icon: <div className="flex size-4 items-center justify-center rounded-[3px] bg-[#563d7c] text-[12px] leading-none font-bold text-white">B</div> },
  { text: "Jinja — Jinja Docu...", w: "w-[104px]", gap: "ml-[17px]", icon: <svg viewBox="0 0 16 16" className="size-4" stroke="#1f2022" fill="none"><path d="M1 3q7 2 14 0M2 6h12M4 4v11M12 4v11M8 4v5M5 9h6M7 9v5" /></svg> },
  { text: "font-awesome - Lib...", w: "w-28", gap: "ml-[17px]", icon: <svg viewBox="0 0 16 16" className="size-4" fill="none" strokeWidth="1.800"><path d="M6 4L1.500 8 6 12" stroke="#e8572e" /><path d="M10 4l4.500 4L10 12" stroke="#9a9a9a" /></svg> },
  { text: "Instances - Elephan...", w: "w-[111px]", gap: "ml-[17px]", icon: <svg viewBox="0 0 16 16" className="size-4" fill="#d5d5d5"><path d="M1 9c0-3 2-4 4-4 2-3 6-2 7-1 3 0 3 3 3 11h-3v-4h-1v4H8v-4H6v4H3V9l-1 4H1z" /></svg> },
  { text: "[Step-by-Step] Crea...", w: "w-28", gap: "ml-[17px]", icon: <svg viewBox="0 0 16 16" className="size-4"><path d="M3 5h10v7l-5 4-5-4z" fill="#f4c99b" /><path d="M2 6c0-5 5-3 11-6 0 2 1 4 0 6z" fill="#ef4a23" /><path d="M4 7.500h3v1.500H4zM9 7.500h3v1.500H9zM6 12h4" stroke="#6d4a34" fill="none" strokeWidth=".8" /></svg> },
  { text: "Django UserCreatio...", w: "w-28", gap: "ml-[17px]", icon: <svg viewBox="0 0 16 16" className="size-4"><path d="M0 0h16L8 16z" fill="#f00" /><path d="M4.500 3.500h7M8 3.500V11" stroke="#35363a" strokeWidth="1.300" /></svg> },
];

/* Hexagonal emblem: trees and sun inside a ring of letters. */
const Emblem = ({ fill, line, ring, className = "" }: { fill: string; line: string; ring: string; className?: string }) => (
  <svg viewBox="0 0 90 98" className={className}>
    <path d="M45 0L81 18Q89 22 89 30V68Q89 76 81 80L45 98 9 80Q1 76 1 68V30Q1 22 9 18z" fill={fill} />
    <path d="M45 4L78 20.500Q85.500 24 85.500 31V67Q85.500 74 78 77.500L45 94 12 77.500Q4.500 74 4.500 67V31Q4.500 24 12 20.500z" fill="none" stroke={ring} strokeWidth="1.300" />
    <g stroke={line} fill="none" strokeWidth="1">
      <path d="M37 41v18M34 46l3-5 3 5M33 50l4-5 4 5M33 54l4-5 4 5M53 39v20M50 44l3-5 3 5M49 49l4-6 4 6M49 54l4-6 4 6M33 60h24M34 58q4-5 10 0 5-3 12 0" />
      <circle cx="45" cy="42" r="3" />
    </g>
    <g fill={line} className="font-['Open_Sans'] text-[7px]" textAnchor="middle">
      <circle cx="22" cy="50" r="2" /><circle cx="68" cy="50" r="2" />
      <text x="36" y="30" transform="rotate(-15 36 28)">I</text><text x="54" y="30" transform="rotate(15 54 28)">K</text>
      <text x="36" y="74" transform="rotate(15 36 72)">I</text><text x="54" y="74" transform="rotate(-15 54 72)">K</text>
      <text x="23" y="43" transform="rotate(-60 23 41)">H</text><text x="67" y="43" transform="rotate(60 67 41)">E</text>
      <text x="24" y="61" transform="rotate(60 24 59)">H</text><text x="67" y="61" transform="rotate(-60 67 59)">E</text>
    </g>
  </svg>
);

function Site() {
  return (
    <div className="flex h-[937px] overflow-hidden bg-white font-['Roboto',sans-serif]">
      <div className="ml-[252px] flex h-full w-[1400px] shrink-0 flex-col">
        <header className="flex h-[81px] shrink-0 items-start rounded-b border-b border-[#eb5514] bg-[#fafcfb] text-[22px] shadow-[0_3px_14px_1px_rgba(240,80,20,0.75)]">
          <Emblem fill="#ff5c40" line="#ffc2b6" ring="#ffd5cd" className="mt-4 ml-3 h-[54px] w-[50px]" />
          <Fit className="mt-[25px] ml-[392px] w-[49px] leading-[30px] text-[#5c6063]">Home</Fit>
          <Fit className="mt-[25px] ml-[66px] w-[43px] leading-[30px] text-[#5c6063]">Posts</Fit>
          <div className="ml-auto flex gap-4 pt-2 pr-3 text-[23px] font-medium text-[#198754]">
            <div className="flex h-12 w-[71px] items-center justify-center rounded-md border border-[#198754]"><Fit className="w-[44px]">Login</Fit></div>
            <div className="flex h-12 w-[89px] items-center justify-center rounded-md border border-[#198754]"><Fit className="w-[63px]">Sign up</Fit></div>
          </div>
        </header>
        <div className="relative mt-12 ml-[418px] h-[396px] w-[561px] rounded-[9px] border border-[#eb4b0c] shadow-[6px_7px_20px_9px_#f26a35]">
          <div className="absolute top-1 -left-10 h-[408px] w-[680px] bg-white" />
        </div>
        <footer className="mt-auto flex h-[130px] shrink-0 items-start rounded-t border border-b-0 border-black bg-[#ec4a0a]">
          <Emblem fill="#fff" line="#222" ring="#ec4a0a" className="mt-[18px] ml-4 h-[98px] w-[90px]" />
          <div className="mt-5 ml-[425px] flex h-[109px] w-[334px] flex-col items-center">
            <Fit className="w-[115px] text-[34px] leading-[44px] font-medium text-white">Follow us:</Fit>
            <div className="mt-[6px] flex gap-[15px] text-[32px] text-white">
              <FaFacebookSquare /><FaTwitterSquare /><FaInstagramSquare /><FaYoutubeSquare />
            </div>
            <Fit className="mt-[12px] w-[334px] text-[16px] leading-6 text-[#16110f]">Copyright  @2023.  Take  a  hike.  All  rights  reserved.</Fit>
          </div>
          <div className="mt-[23px] mr-[27px] ml-auto flex w-[428px] flex-col items-center">
            <Fit className="ml-[10px] w-[164px] text-[18px] leading-[28px] text-[#272b2f]">Subscribe to our Newsletter</Fit>
            <div className="mt-[5px] flex h-[38px] w-full items-stretch rounded-md border border-white bg-white">
              <Fit className="mt-1.5 ml-3 w-[82px] text-[17px] leading-6 font-light text-[#6c757d]">Email address</Fit>
              <div className="ml-auto flex w-11 items-center justify-center rounded-[5px] bg-[#ec4a0a]"><FaArrowCircleRight className="size-[21px] text-white" /></div>
            </div>
          </div>
        </footer>
      </div>
      <div className="ml-auto flex w-[17px] flex-col items-center bg-[#f1f1f1]">
        <div className="flex h-[17px] items-center"><Caret className="rotate-180 text-[#a3a3a3]" /></div>
        <div className="h-[888px] w-[13px] bg-[#c1c1c1]" />
        <div className="mt-auto flex h-[17px] items-center"><Caret className="text-[#505050]" /></div>
      </div>
    </div>
  );
}

function SmallTaskbar() {
  return (
    <div className="flex h-10 bg-[linear-gradient(to_right,#d5d5d6,#dedee0_50%,#e5d9df_80%,#e6dadf)]">
      <div className="flex w-12 items-center pl-4"><WindowsIcon className="size-4" /></div>
      <div className="flex w-12 items-center pl-4"><SearchGlyph className="size-4" /></div>
      <div className="flex w-[51px] items-center pl-4"><TaskViewIcon className="size-4" /></div>
      {apps.map((Icon, i) => (
        <div key={i} className={"flex h-full w-[49px] flex-col items-center " + (i === 3 ? "border-r-2 border-[#cfcfd0] bg-[#f0f0f0]" : "")}>
          <div className="flex h-[38px] items-center pt-0.5"><Icon className="size-6" /></div>
          {i > 0 && <div className={"h-0.5 bg-[#0078d7] " + (i === 3 ? "w-full" : "w-10")} />}
        </div>
      ))}
      <div className="ml-auto flex flex-col items-center pt-[3px] pr-[5px] text-[12px] leading-[18px] text-[#111]">
        <Fit className="w-[26px]">14:29</Fit>
        <Fit className="w-[58px]">03/04/2023</Fit>
      </div>
    </div>
  );
}

export default function App() {
  return (
    <div className="flex h-[1080px] w-[3840px] overflow-hidden">
      <PaintScreen />
      <div className="flex h-[1080px] w-[1920px] shrink-0 flex-col font-['Open_Sans',sans-serif]">
        <Tabs />
        <Toolbar />
        <div className="flex h-[33px] items-center border-b border-[#5f6368] bg-[#35363a] pb-1 text-[12px] text-[#e8eaed]">
          {bookmarks.map((b) => (
            <div key={b.text} className={"flex items-center " + b.gap}>
              {b.icon}
              <Fit className={"ml-2 " + b.w}>{b.text}</Fit>
            </div>
          ))}
        </div>
        <Site />
        <SmallTaskbar />
      </div>
    </div>
  );
}
